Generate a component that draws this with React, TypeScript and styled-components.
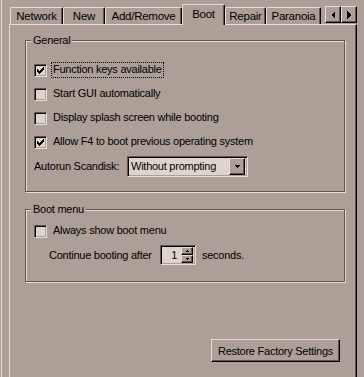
import React from 'react';
import styled, { createGlobalStyle } from 'styled-components';

const BG = '#ab9f98';
const LIGHT = '#e6ded6';
const DARK = '#62554f';
const FIELD = '#ddd5cd';

const GlobalStyle = createGlobalStyle`
  html, body {
    margin: 0;
    padding: 0;
    height: 100%;
    overflow: hidden;
    background: ${BG};
  }
  body {
    font-family: "Liberation Sans", Arial, sans-serif;
    font-size: 11px;
    letter-spacing: -0.25px;
    color: #000;
  }
`;

const Window = styled.div`
  height: 377px;
  margin-left: 1px;
  border-left: 1px solid ${LIGHT};
  padding: 4px 0 0 7px;
  box-sizing: border-box;
`;

const TabControl = styled.div`
  width: 348px;
  height: 373px;
  display: flex;
  flex-direction: column;
`;

const TabStrip = styled.div`
  display: flex;
  align-items: flex-end;
  height: 20px;
  padding-left: 1px;
`;

const Tab = styled.div<{ $w: number; $active?: boolean }>`
  position: relative;
  z-index: ${({ $active }) => ($active ? 1 : 0)};
  width: ${({ $w }) => $w}px;
  height: ${({ $active }) => ($active ? 21 : 17)}px;
  margin-bottom: ${({ $active }) => ($active ? -1 : 0)}px;
  box-sizing: border-box;
  background: ${BG};
  border-top: 1px solid ${LIGHT};
  border-left: 1px solid ${LIGHT};
  border-right: 1px solid #000;
  box-shadow: inset -1px 0 0 ${DARK};
  border-radius: 2px 2px 0 0;
  display: flex;
  justify-content: center;
  padding-top: ${({ $active }) => ($active ? 3 : 2)}px;
  white-space: nowrap;
  font-size: 11.5px;
`;

const Arrows = styled.div`
  display: flex;
  margin-left: auto;
  margin-bottom: 1px;
`;

const Raised = styled.div`
  box-sizing: border-box;
  background: ${BG};
  border-top: 1px solid ${LIGHT};
  border-left: 1px solid ${LIGHT};
  border-right: 1px solid #000;
  border-bottom: 1px solid #000;
  box-shadow: inset -1px -1px 0 ${DARK};
  display: flex;
  align-items: center;
  justify-content: center;
`;

const ArrowButton = styled(Raised)`
  width: 16px;
  height: 17px;
`;

const Page = styled.div`
  flex: 1;
  display: flex;
  flex-direction: column;
  box-sizing: border-box;
  border-top: 1px solid ${LIGHT};
  border-left: 1px solid ${LIGHT};
  border-right: 1px solid #000;
  box-shadow: inset -1px 0 0 ${DARK};
  padding: 15px 11px 0 15px;
`;

const Frame = styled.div<{ $pad: string; $mt?: number }>`
  position: relative;
  margin-top: ${({ $mt }) => $mt || 0}px;
  border: 1px solid ${DARK};
  box-shadow: 1px 1px 0 ${LIGHT}, inset 1px 1px 0 ${LIGHT};
  padding: ${({ $pad }) => $pad};
  display: flex;
  flex-direction: column;
`;

const Legend = styled.span`
  position: absolute;
  top: -7px;
  left: 5px;
  padding: 0 2px;
  background: ${BG};
  line-height: 13px;
`;

const Row = styled.div<{ $indent?: number }>`
  display: flex;
  align-items: center;
  height: 24px;
  padding-left: ${({ $indent }) => $indent || 0}px;
`;

const CheckBox = styled.div`
  width: 13px;
  height: 13px;
  box-sizing: border-box;
  background: ${FIELD};
  border: 1px solid;
  border-color: ${DARK} ${LIGHT} ${LIGHT} ${DARK};
  box-shadow: inset 1px 1px 0 #000, inset -1px -1px 0 ${BG};
  display: flex;
  align-items: center;
  justify-content: center;
`;

const CheckLabel = styled.span<{ $focus?: boolean }>`
  margin-left: 4px;
  padding: 1px 1px 2px 1px;
  border: 1px dotted ${({ $focus }) => ($focus ? '#000' : 'transparent')};
  line-height: 11px;
`;

const FieldLabel = styled.span<{ $w: number }>`
  width: ${({ $w }) => $w}px;
  white-space: nowrap;
`;

const Sunken = styled.div<{ $w: number; $h: number }>`
  width: ${({ $w }) => $w}px;
  height: ${({ $h }) => $h}px;
  box-sizing: border-box;
  background: ${FIELD};
  border: 1px solid;
  border-color: ${DARK} ${LIGHT} ${LIGHT} ${DARK};
  box-shadow: inset 1px 1px 0 #000, inset -1px -1px 0 ${BG};
  display: flex;
  align-items: center;
`;

const ComboText = styled.span`
  flex: 1;
  padding-left: 3px;
`;

const ComboButton = styled(Raised)`
  width: 16px;
  height: 17px;
  margin-right: 2px;
`;

const SpinText = styled.span`
  flex: 1;
  text-align: right;
  padding-right: 4px;
`;

const SpinButtons = styled.div`
  display: flex;
  flex-direction: column;
  margin-right: 2px;
`;

const SpinButton = styled(Raised)`
  width: 12px;
  height: 8px;
`;

const After = styled.span`
  margin-left: 6px;
`;

const PushButton = styled(Raised)`
  align-self: flex-end;
  margin: 57px 5px 0 0;
  width: 129px;
  height: 23px;
`;

const Check = () => (
  <svg width="7" height="7" viewBox="0 0 7 7" shapeRendering="crispEdges">
    <path d="M6 0h1v1H6zM5 1h2v1H5zM0 2h1v1H0zM4 2h3v1H4zM0 3h2v1H0zM3 3h3v1H3zM0 4h5v1H0zM1 5h3v1H1zM2 6h1v1H2z" fill="#000" />
  </svg>
);

const Tri = ({ dir, size = 4 }: { dir: 'left' | 'right' | 'up' | 'down'; size?: number }) => {
  const s = size;
  const paths: Record<string, string> = {
    left: `M${s} 0 L${s} ${s * 2} L0 ${s} Z`,
    right: `M0 0 L0 ${s * 2} L${s} ${s} Z`,
    up: `M0 ${s} L${s * 2} ${s} L${s} 0 Z`,
    down: `M0 0 L${s * 2} 0 L${s} ${s} Z`,
  };
  const horiz = dir === 'left' || dir === 'right';
  return (
    <svg width={horiz ? s : s * 2} height={horiz ? s * 2 : s} shapeRendering="crispEdges">
      <path d={paths[dir]} fill="#000" />
    </svg>
  );
};

const tabs = [
  { name: 'Network', w: 53 },
  { name: 'New', w: 42 },
  { name: 'Add/Remove', w: 77 },
  { name: 'Boot', w: 43, active: true },
  { name: 'Repair', w: 41 },
  { name: 'Paranoia', w: 55 },
];

const general = [
  { label: 'Function keys available', checked: true, focus: true },
  { label: 'Start GUI automatically', checked: false },
  { label: 'Display splash screen while booting', checked: false },
  { label: 'Allow F4 to boot previous operating system', checked: true },
];

export default function App() {
  return (
    <>
      <GlobalStyle />
      <Window>
        <TabControl>
          <TabStrip>
            {tabs.map((t) => (
              <Tab key={t.name} $w={t.w} $active={t.active}>
                {t.name}
              </Tab>
            ))}
            <Arrows>
              <ArrowButton>
                <Tri dir="left" />
              </ArrowButton>
              <ArrowButton>
                <Tri dir="right" />
              </ArrowButton>
            </Arrows>
          </TabStrip>
          <Page>
            <Frame $pad="17px 8px 13px 8px">
              <Legend>General</Legend>
              {general.map((g) => (
                <Row key={g.label}>
                  <CheckBox>{g.checked && <Check />}</CheckBox>
                  <CheckLabel $focus={g.focus}>{g.label}</CheckLabel>
                </Row>
              ))}
              <Row>
                <FieldLabel $w={93}>Autorun Scandisk:</FieldLabel>
                <Sunken $w={121} $h={21}>
                  <ComboText>Without prompting</ComboText>
                  <ComboButton>
                    <Tri dir="down" size={3} />
                  </ComboButton>
                </Sunken>
              </Row>
            </Frame>
            <Frame $pad="9px 8px 14px 8px" $mt={17}>
              <Legend>Boot menu</Legend>
              <Row>
                <CheckBox />
                <CheckLabel>Always show boot menu</CheckLabel>
              </Row>
              <Row $indent={15}>
                <FieldLabel $w={111}>Continue booting after</FieldLabel>
                <Sunken $w={36} $h={20}>
                  <SpinText>1</SpinText>
                  <SpinButtons>
                    <SpinButton>
                      <Tri dir="up" size={2} />
                    </SpinButton>
                    <SpinButton>
                      <Tri dir="down" size={2} />
                    </SpinButton>
                  </SpinButtons>
                </Sunken>
                <After>seconds.</After>
              </Row>
            </Frame>
            <PushButton>Restore Factory Settings</PushButton>
          </Page>
        </TabControl>
      </Window>
    </>
  );
}
